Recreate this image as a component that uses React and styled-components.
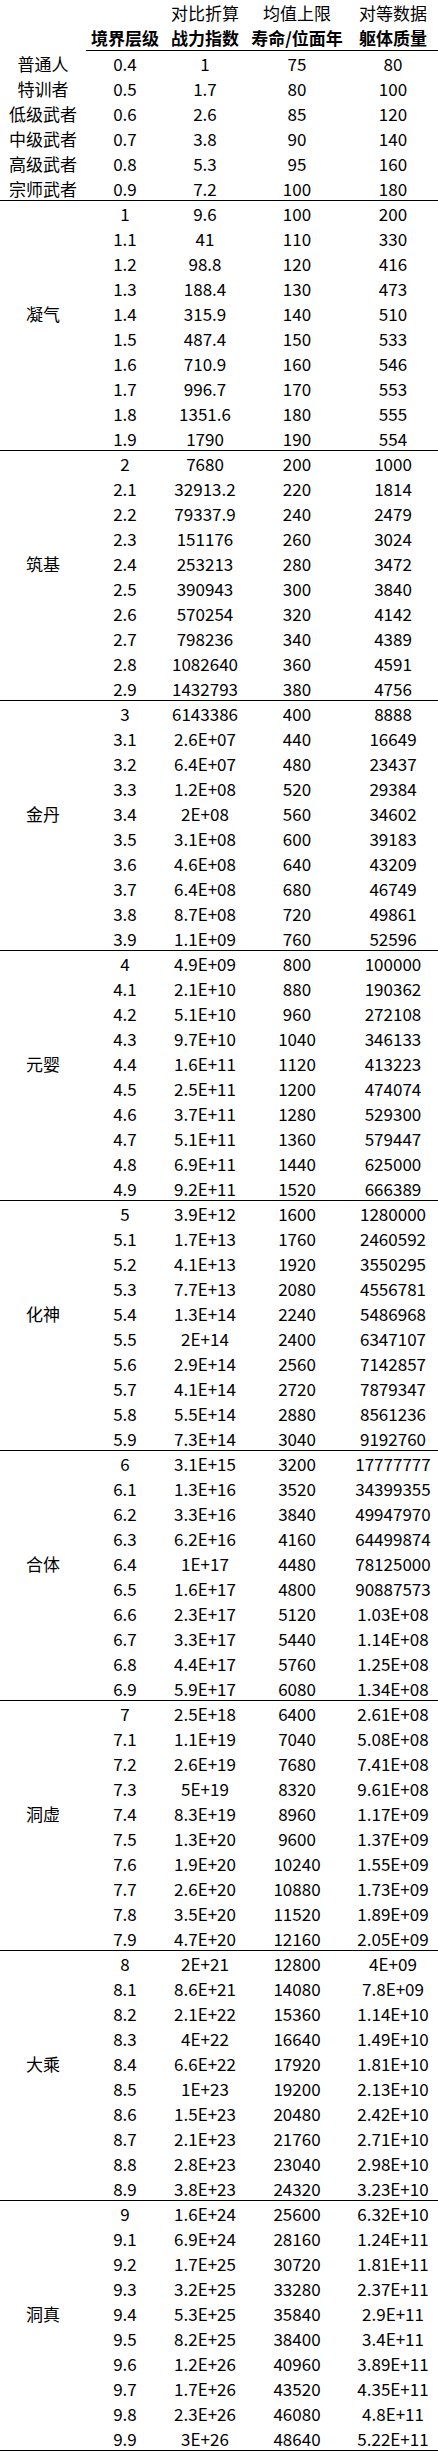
import React from 'react';
import styled, { createGlobalStyle } from 'styled-components';

// Page reset: no body margin, plain white background
const GlobalStyle = createGlobalStyle`
  body {
    margin: 0;
    background: #ffffff;
    color: #000000;
    font-family: "Noto Sans CJK SC", "Noto Sans", sans-serif;
  }
`;

// Shared column widths for every row of the table
const COLUMNS = '86px 78px 82px 102px 90px';

// Whole table, rows stacked top to bottom
const Sheet = styled.div`
  display: flex;
  flex-direction: column;
  width: 438px;
`;

// One table row; $divider draws the black rule under a realm group
const Row = styled.div`
  display: grid;
  grid-template-columns: ${COLUMNS};
  height: ${(p) => p.$height || 25}px;
  box-sizing: border-box;
  border-bottom: ${(p) => (p.$divider ? '1px solid #000' : 'none')};
`;

// One cell, text centred in its column
const Cell = styled.div`
  display: flex;
  align-items: center;
  justify-content: center;
  box-sizing: border-box;
  font-size: 17px;
  font-weight: ${(p) => (p.$bold ? 700 : 400)};
  white-space: nowrap;
  border-bottom: ${(p) => (p.$rule ? '1px solid #000' : 'none')};
`;

// Rank names for ordinary humans
const humans = [
  ['普通人', '0.4', '1', '75', '80'],
  ['特训者', '0.5', '1.7', '80', '100'],
  ['低级武者', '0.6', '2.6', '85', '120'],
  ['中级武者', '0.7', '3.8', '90', '140'],
  ['高级武者', '0.8', '5.3', '95', '160'],
  ['宗师武者', '0.9', '7.2', '100', '180'],
];

// Cultivation realms, ten sub-levels each: level, power, lifespan, mass
const realms = [
  {
    name: '凝气',
    rows: [
      '1 9.6 100 200', '1.1 41 110 330', '1.2 98.8 120 416', '1.3 188.4 130 473',
      '1.4 315.9 140 510', '1.5 487.4 150 533', '1.6 710.9 160 546', '1.7 996.7 170 553',
      '1.8 1351.6 180 555', '1.9 1790 190 554',
    ],
  },
  {
    name: '筑基',
    rows: [
      '2 7680 200 1000', '2.1 32913.2 220 1814', '2.2 79337.9 240 2479', '2.3 151176 260 3024',
      '2.4 253213 280 3472', '2.5 390943 300 3840', '2.6 570254 320 4142', '2.7 798236 340 4389',
      '2.8 1082640 360 4591', '2.9 1432793 380 4756',
    ],
  },
  {
    name: '金丹',
    rows: [
      '3 6143386 400 8888', '3.1 2.6E+07 440 16649', '3.2 6.4E+07 480 23437', '3.3 1.2E+08 520 29384',
      '3.4 2E+08 560 34602', '3.5 3.1E+08 600 39183', '3.6 4.6E+08 640 43209', '3.7 6.4E+08 680 46749',
      '3.8 8.7E+08 720 49861', '3.9 1.1E+09 760 52596',
    ],
  },
  {
    name: '元婴',
    rows: [
      '4 4.9E+09 800 100000', '4.1 2.1E+10 880 190362', '4.2 5.1E+10 960 272108',
      '4.3 9.7E+10 1040 346133', '4.4 1.6E+11 1120 413223', '4.5 2.5E+11 1200 474074',
      '4.6 3.7E+11 1280 529300', '4.7 5.1E+11 1360 579447', '4.8 6.9E+11 1440 625000',
      '4.9 9.2E+11 1520 666389',
    ],
  },
  {
    name: '化神',
    rows: [
      '5 3.9E+12 1600 1280000', '5.1 1.7E+13 1760 2460592', '5.2 4.1E+13 1920 3550295',
      '5.3 7.7E+13 2080 4556781', '5.4 1.3E+14 2240 5486968', '5.5 2E+14 2400 6347107',
      '5.6 2.9E+14 2560 7142857', '5.7 4.1E+14 2720 7879347', '5.8 5.5E+14 2880 8561236',
      '5.9 7.3E+14 3040 9192760',
    ],
  },
  {
    name: '合体',
    rows: [
      '6 3.1E+15 3200 17777777', '6.1 1.3E+16 3520 34399355', '6.2 3.3E+16 3840 49947970',
      '6.3 6.2E+16 4160 64499874', '6.4 1E+17 4480 78125000', '6.5 1.6E+17 4800 90887573',
      '6.6 2.3E+17 5120 1.03E+08', '6.7 3.3E+17 5440 1.14E+08', '6.8 4.4E+17 5760 1.25E+08',
      '6.9 5.9E+17 6080 1.34E+08',
    ],
  },
  {
    name: '洞虚',
    rows: [
      '7 2.5E+18 6400 2.61E+08', '7.1 1.1E+19 7040 5.08E+08', '7.2 2.6E+19 7680 7.41E+08',
      '7.3 5E+19 8320 9.61E+08', '7.4 8.3E+19 8960 1.17E+09', '7.5 1.3E+20 9600 1.37E+09',
      '7.6 1.9E+20 10240 1.55E+09', '7.7 2.6E+20 10880 1.73E+09', '7.8 3.5E+20 11520 1.89E+09',
      '7.9 4.7E+20 12160 2.05E+09',
    ],
  },
  {
    name: '大乘',
    rows: [
      '8 2E+21 12800 4E+09', '8.1 8.6E+21 14080 7.8E+09', '8.2 2.1E+22 15360 1.14E+10',
      '8.3 4E+22 16640 1.49E+10', '8.4 6.6E+22 17920 1.81E+10', '8.5 1E+23 19200 2.13E+10',
      '8.6 1.5E+23 20480 2.42E+10', '8.7 2.1E+23 21760 2.71E+10', '8.8 2.8E+23 23040 2.98E+10',
      '8.9 3.8E+23 24320 3.23E+10',
    ],
  },
  {
    name: '洞真',
    rows: [
      '9 1.6E+24 25600 6.32E+10', '9.1 6.9E+24 28160 1.24E+11', '9.2 1.7E+25 30720 1.81E+11',
      '9.3 3.2E+25 33280 2.37E+11', '9.4 5.3E+25 35840 2.9E+11', '9.5 8.2E+25 38400 3.4E+11',
      '9.6 1.2E+26 40960 3.89E+11', '9.7 1.7E+26 43520 4.35E+11', '9.8 2.3E+26 46080 4.8E+11',
      '9.9 3E+26 48640 5.22E+11',
    ],
  },
];

// One data row: label (may be empty) then the four numbers
const DataRow = ({ label, values, divider }) => (
  <Row $divider={divider}>
    <Cell>{label}</Cell>
    {values.map((v, i) => (
      <Cell key={i}>{v}</Cell>
    ))}
  </Row>
);

const App = () => (
  <>
    <GlobalStyle />
    <Sheet>
      {/* Two-line column header */}
      <Row>
        <Cell />
        <Cell />
        <Cell>对比折算</Cell>
        <Cell>均值上限</Cell>
        <Cell>对等数据</Cell>
      </Row>
      <Row $height={26}>
        <Cell />
        <Cell $bold $rule>境界层级</Cell>
        <Cell $bold $rule>战力指数</Cell>
        <Cell $bold $rule>寿命/位面年</Cell>
        <Cell $bold $rule>躯体质量</Cell>
      </Row>

      {/* Ordinary human ranks */}
      {humans.map(([name, ...values], i) => (
        <DataRow key={name} label={name} values={values} divider={i === humans.length - 1} />
      ))}

      {/* Realms, name shown on the x.4 row */}
      {realms.map((realm) =>
        realm.rows.map((line, i) => (
          <DataRow
            key={realm.name + i}
            label={i === 4 ? realm.name : ''}
            values={line.split(' ')}
            divider={i === realm.rows.length - 1}
          />
        ))
      )}
    </Sheet>
  </>
);

export default App;
